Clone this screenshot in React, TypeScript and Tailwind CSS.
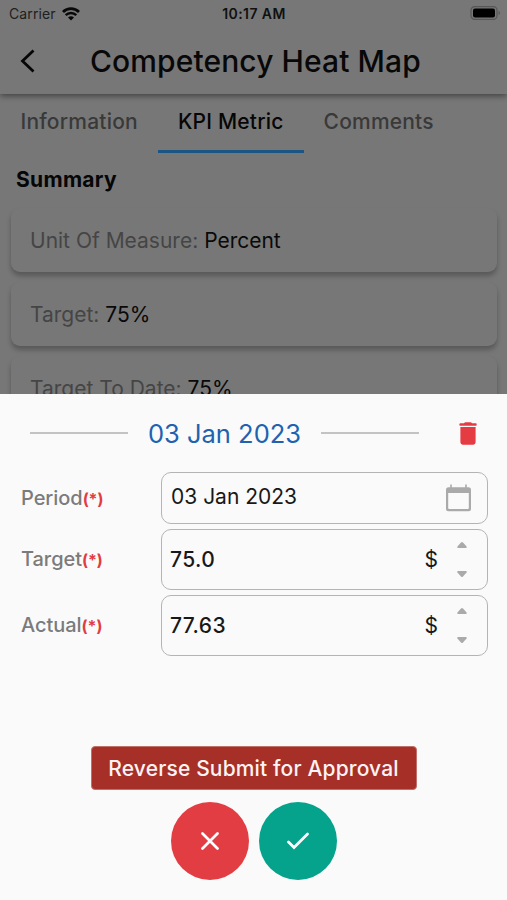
import type { ReactNode } from 'react';

/* PAGE BEHIND THE SHEET */

function StatusBar() {
  return (
    <div className="flex h-[28px] items-center justify-between pl-[9px] pr-[6px] text-[14px] leading-none text-[#101010]">
      <div className="flex w-[200px] items-center gap-[6px]">
        <span className="tracking-[0.1px] text-[#202020]">Carrier</span>
        <svg viewBox="0 0 18 14" className="mb-px h-[14px] w-[18px]" fill="none" aria-hidden="true">
          <path d="M1 4.9a11.6 11.6 0 0 1 16 0" stroke="#080808" strokeWidth="2.8" />
          <path d="M3.7 8.2a7.5 7.5 0 0 1 10.6 0" stroke="#080808" strokeWidth="2.4" />
          <path d="M6 10.6a4.4 4.4 0 0 1 6 0L9 13.5z" fill="#080808" />
        </svg>
      </div>
      <span className="mr-[2px] whitespace-nowrap font-semibold tracking-[0.4px]">10:17 AM</span>
      <div className="flex w-[200px] justify-end">
        <svg viewBox="0 0 31 14" className="mb-[2px] h-[14px] w-[31px]" aria-hidden="true">
          <rect x="1" y="0.7" width="26" height="12.6" rx="3.6" fill="none" stroke="#575757" strokeWidth="1.2" />
          <rect x="3" y="2.6" width="22" height="8.8" rx="2" fill="#000" />
          <path d="M28.6 4.8c1.8.7 1.8 3.7 0 4.4z" fill="#575757" />
        </svg>
      </div>
    </div>
  );
}

function Tab({ label, active }: { label: string; active?: boolean }) {
  return (
    <div
      className={`flex h-[59px] justify-center px-[20px] pt-[13px] text-[21px] font-medium leading-[30px] tracking-[0.2px] whitespace-nowrap ${
        active ? 'border-b-[3px] border-[#1c5484] text-[#060606]' : 'text-[#393939]'
      }`}
    >
      {label}
    </div>
  );
}

function SummaryCard({ label, value }: { label: string; value: string }) {
  return (
    <div className="mb-[10px] flex h-[64px] items-center rounded-[9px] bg-[#777] px-[19px] pt-px text-[21px] shadow-[0_4px_5px_rgba(0,0,0,0.26)]">
      <span className="text-[#454545]">{label}:&nbsp;</span>
      <span className="text-[#090909]">{value}</span>
    </div>
  );
}

/* BOTTOM SHEET */

function FieldRow({ label, height, children }: { label: string; height: string; children: ReactNode }) {
  return (
    <div className="flex items-center">
      <div className="w-[140px] pb-px text-[20px] font-medium tracking-[-0.05px] text-[#7b7b7b]">
        {label}
        <span className="text-[16px] font-bold text-[#e23b43]">(*)</span>
      </div>
      <div className={`flex flex-1 items-center rounded-[10px] border border-[#b4b4b4] ${height}`}>
        {children}
      </div>
    </div>
  );
}

function NumberInput({ value }: { value: string }) {
  return (
    <>
      <span className="flex-1 pl-2 text-[21px] font-medium tracking-[0.4px] text-[#181818]">{value}</span>
      <span className="text-[21px] text-[#181818]">$</span>
      <div className="mb-px ml-[19px] mr-[20px] flex flex-col gap-[23px]">
        <svg viewBox="0 0 10 6" className="h-[6px] w-[10px]" fill="#aaa" aria-hidden="true">
          <path d="M4 .6a1.4 1.4 0 0 1 2 0L9.6 4.5Q10 6 9 6H1Q0 6 .4 4.5z" />
        </svg>
        <svg viewBox="0 0 10 6" className="h-[6px] w-[10px]" fill="#aaa" aria-hidden="true">
          <path d="M4 5.4a1.4 1.4 0 0 0 2 0L9.6 1.5Q10 0 9 0H1Q0 0 .4 1.5z" />
        </svg>
      </div>
    </>
  );
}

export default function App() {
  return (
    <div className="flex h-[900px] w-[507px] flex-col overflow-hidden bg-[#777] font-['Inter',sans-serif]">
      <div className="h-[394px] shrink-0 overflow-hidden">
        <header className="relative h-[94px] bg-[#777] shadow-[0_2px_6px_rgba(0,0,0,0.45)]">
          <StatusBar />
          <div className="flex h-[66px] items-center pl-[20px]">
            <svg viewBox="0 0 16 24" className="mb-px h-[24px] w-[16px]" fill="none" aria-hidden="true">
              <path d="M13.5 1.5L2.5 12l11 10.5" stroke="#060606" strokeWidth="2.8" />
            </svg>
            <h1 className="ml-[54px] whitespace-nowrap text-[30px] font-medium tracking-[0.1px] text-[#080808]">
              Competency Heat Map
            </h1>
          </div>
        </header>

        <nav className="flex pl-[0.5px]">
          <Tab label="Information" />
          <Tab label="KPI Metric" active />
          <Tab label="Comments" />
        </nav>

        <h2 className="mt-[12px] pl-4 text-[21px] font-bold leading-[30px] tracking-[0.3px] text-[#060606]">Summary</h2>

        <div className="mt-[13px] pl-[11px] pr-[10px]">
          <SummaryCard label="Unit Of Measure" value="Percent" />
          <SummaryCard label="Target" value="75%" />
          <SummaryCard label="Target To Date" value="75%" />
        </div>
      </div>

      <div className="flex flex-1 flex-col bg-[#fafafa]">
        <div className="flex h-[78px] items-center pl-[30px]">
          <div className="h-[2px] w-[98px] bg-[#c3c3c3]" />
          <span className="w-[193px] pt-[3px] text-center text-[25.5px] text-[#2062b0]">03 Jan 2023</span>
          <div className="h-[2px] w-[98px] bg-[#c3c3c3]" />
          <svg viewBox="0 0 18 23" className="ml-[40px] h-[23px] w-[18px]" fill="#e53b43" aria-hidden="true">
            <path d="M5 1.2Q5.6.2 6.600.2h4.800q1 0 1.600 1h3.800q.9 0 .9 1.400t-.9 1.200H1.200Q.3 3.800.3 2.600t.9-1.400z" />
            <path d="M1.400 5h15.200v15.300a2.400 2.400 0 0 1-2.400 2.400H3.800a2.400 2.400 0 0 1-2.400-2.400z" />
          </svg>
        </div>

        <div className="flex flex-col gap-[5px] pl-[21px] pr-[19px]">
          <FieldRow label="Period" height="h-[52px]">
            <span className="flex-1 pb-[2px] pl-[9px] text-[21px] text-[#181818]">03 Jan 2023</span>
            <svg viewBox="0 0 25 28" className="mr-[16px] h-[28px] w-[25px]" fill="#aaa" aria-hidden="true">
              <path
                fillRule="evenodd"
                d="M4.200.5h1.600v2.700h13.400V.5h1.600v2.700h1.700A2.500 2.500 0 0 1 25 5.700v19a2.500 2.500 0 0 1-2.500 2.500h-20A2.500 2.500 0 0 1 0 24.700v-19a2.500 2.500 0 0 1 2.500-2.500h1.700zM2.200 9v15q0 1 1 1h18.600q1 0 1-1V9z"
              />
            </svg>
          </FieldRow>
          <FieldRow label="Target" height="h-[61px]">
            <NumberInput value="75.0" />
          </FieldRow>
          <FieldRow label="Actual" height="h-[61px]">
            <NumberInput value="77.63" />
          </FieldRow>
        </div>

        <div className="mt-[90px] flex flex-col items-center">
          <button className="h-[44px] w-[326px] rounded-[4px] border border-[#c0706a] bg-[#a63028] pt-px text-[21px] font-medium tracking-[0.15px] whitespace-nowrap text-[#fdf3f2]">
            Reverse Submit for Approval
          </button>
          <div className="mt-[12px] flex gap-[10px]">
            <button className="flex size-[78px] items-center justify-center rounded-full bg-[#e33d44]" aria-label="Cancel">
              <svg viewBox="0 0 18 18" className="size-[18px]" fill="none" aria-hidden="true">
                <path d="M1.5 1.5l15 15M16.5 1.5l-15 15" stroke="#fff" strokeWidth="2.7" strokeLinecap="round" />
              </svg>
            </button>
            <button className="flex size-[78px] items-center justify-center rounded-full bg-[#05a28c]" aria-label="Confirm">
              <svg viewBox="0 0 22 18" className="h-[18px] w-[22px]" fill="none" aria-hidden="true">
                <path d="M1.5 10L7 15.5 20.5 2" stroke="#fff" strokeWidth="2.7" strokeLinecap="round" />
              </svg>
            </button>
          </div>
        </div>
      </div>
    </div>
  );
}
